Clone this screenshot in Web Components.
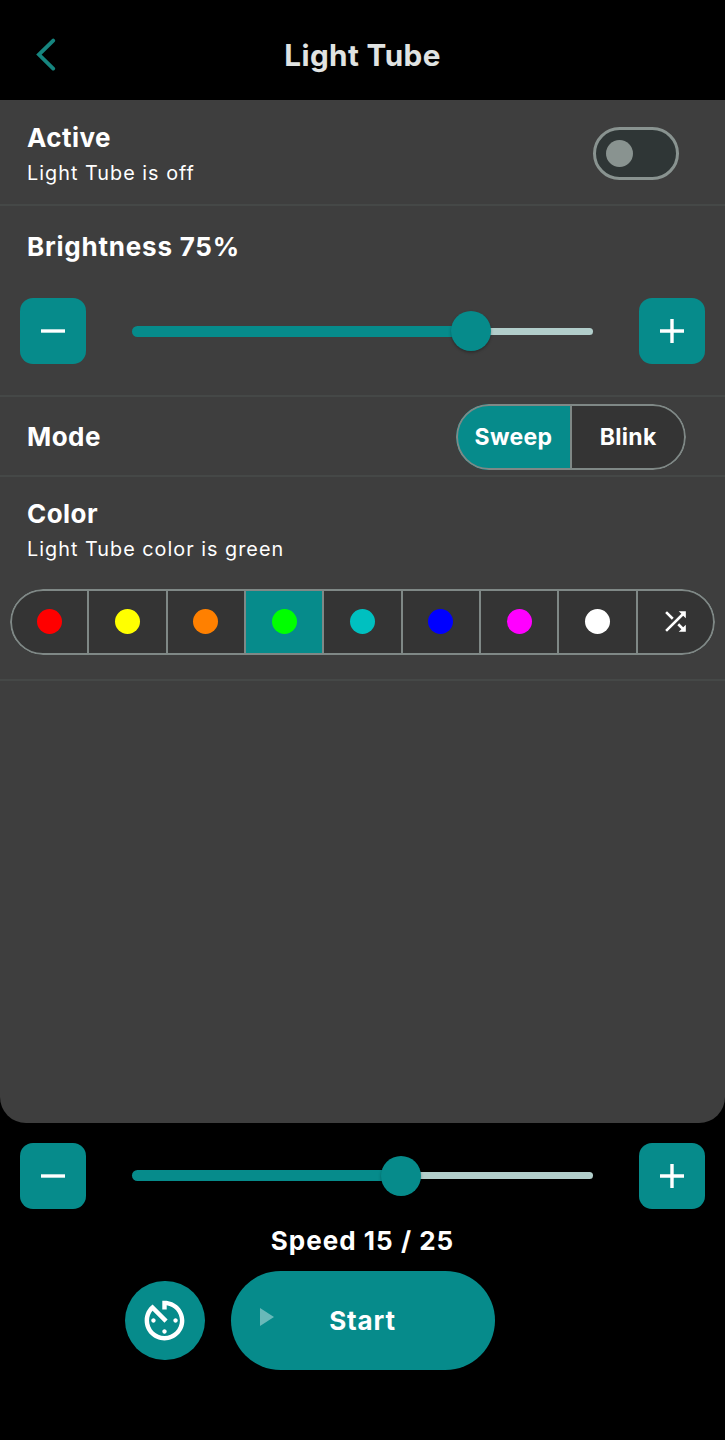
<!DOCTYPE html>
<html lang="en">
<head>
<meta charset="utf-8">
<title>Light Tube</title>
<style>
  html, body { margin: 0; height: 100%; background: #000; }
  body {
    --teal: #068b8b; --panel: #3e3e3e; --cell: #343434; --outline: #7f8886; --rule: #454847;
    font-family: Inter, sans-serif; color: #fff;
  }
</style>
</head>
<body>
<light-tube-app></light-tube-app>
<script>
class Base extends HTMLElement {
  constructor() {
    super();
    this.attachShadow({ mode: 'open' });
  }
  connectedCallback() {
    this.shadowRoot.innerHTML = '<style>*{box-sizing:border-box}' + this.css() + '</style>' + this.html();
  }
  css() { return ''; }
  html() { return '<slot></slot>'; }
}

customElements.define('app-header', class extends Base {
  css() { return `
    :host { display: grid; grid-template-columns: 92px 1fr 92px; align-items: center; height: 100px; padding-top: 9px; box-sizing: border-box; background: #000; }
    svg { display: block; margin-left: 36px; }
    h1 { margin: 0; text-align: center; font-size: 29.7px; line-height: 36px; font-weight: 700; letter-spacing: .4px; color: #e0e3e2; }`; }
  html() { return `
    <svg width="20" height="34" viewBox="0 0 20 34"><path d="M17.2 2.6 L2.9 16.6 L17.2 30.6" fill="none" stroke="#16857f" stroke-width="3.8" stroke-linecap="round"/></svg>
    <h1><slot></slot></h1>`; }
});

customElements.define('setting-label', class extends Base {
  css() { return `
    :host { display: block; }
    .t { font-size: 26px; line-height: 32px; font-weight: 700; letter-spacing: var(--track, .45px); }
    .s { font-size: 19.8px; line-height: 26px; font-weight: 400; letter-spacing: 1.02px; padding-top: 6px; }`; }
  html() {
    const s = this.getAttribute('sub');
    return `<div class="t"><slot></slot></div>` + (s ? `<div class="s">${s}</div>` : '');
  }
});

customElements.define('toggle-switch', class extends Base {
  css() { return `
    :host { display: flex; align-items: center; box-sizing: border-box; width: 86px; height: 53px; border: 3px solid #899390; border-radius: 27px; background: #2f3636; padding-left: 10px; }
    i { width: 27px; height: 27px; border-radius: 50%; background: #899390; }`; }
  html() { return '<i></i>'; }
});

customElements.define('step-button', class extends Base {
  css() { return `
    :host { display: grid; place-items: center; width: 66px; height: 66px; border-radius: 13px; background: var(--teal); }
    svg { display: block; }`; }
  html() {
    const v = this.getAttribute('kind') === 'plus' ? 'M12 0V24' : '';
    return `<svg width="24" height="24" viewBox="0 0 24 24"><path d="M0 12H24${v}" stroke="#fff" stroke-width="3.4" fill="none"/></svg>`;
  }
});

customElements.define('value-slider', class extends Base {
  css() { return `
    :host { display: flex; align-items: center; height: 40px; }
    .on { height: 10.6px; border-radius: 6px 0 0 6px; background: var(--teal); margin-right: -2px; }
    .knob { flex: none; width: 40px; height: 40px; border-radius: 50%; background: var(--teal); box-shadow: 0 1.5px 3px rgba(0,0,0,.3); z-index: 1; }
    .off { flex: 1; height: 7.4px; border-radius: 0 4px 4px 0; background: #b2cecb; margin-left: -2px; }`; }
  html() { return `<div class="on" style="width:${this.getAttribute('fill')}px"></div><div class="knob"></div><div class="off"></div>`; }
});

customElements.define('stepped-slider', class extends Base {
  css() { return `
    :host { display: grid; grid-template-columns: 66px 461.5px 66px; justify-content: space-between; align-items: center; padding: 0 20px; }`; }
  html() { return `<step-button kind="minus"></step-button><value-slider fill="${this.getAttribute('fill')}"></value-slider><step-button kind="plus"></step-button>`; }
});

customElements.define('segment-bar', class extends Base {
  css() { return `
    :host { display: flex; position: relative; height: 66px; border-radius: 33px; overflow: hidden; background: var(--cell); }
    :host::after { content: ''; position: absolute; inset: 0; box-sizing: border-box; border: 2px solid var(--outline); border-radius: 33px; }
    ::slotted(*) { flex: 1; }
    ::slotted(:not(:first-child)) { box-shadow: -1px 0 0 var(--outline), inset 1px 0 0 var(--outline); }`; }
});

customElements.define('segment-item', class extends Base {
  css() { return `
    :host { display: flex; align-items: center; justify-content: center; box-sizing: border-box; font-size: 23px; font-weight: 700; letter-spacing: .3px; }
    :host([selected]) { background: var(--teal); }
    i { width: 25px; height: 25px; border-radius: 50%; margin-top: -1px; }
    svg { display: block; }`; }
  html() {
    const c = this.getAttribute('color');
    if (c) return `<i style="background:${c}"></i>`;
    if (this.hasAttribute('shuffle')) return `<svg width="31" height="31" viewBox="0 0 24 24" fill="#fff"><path d="M10.59 9.17L5.41 4 4 5.41l5.17 5.17 1.42-1.41zM14.5 4l2.04 2.04L4 18.59 5.41 20 17.96 7.46 20 9.5V4h-5.5zm.33 9.41l-1.41 1.41 3.13 3.13L14.5 20H20v-5.5l-2.04 2.04-3.13-3.13z"/></svg>`;
    return '<slot></slot>';
  }
});

customElements.define('timer-button', class extends Base {
  css() { return `
    :host { display: grid; place-items: center; width: 79.5px; height: 79.5px; border-radius: 50%; background: var(--teal); }
    svg { display: block; }`; }
  html() { return `<svg width="53" height="53" viewBox="0 0 24 24" fill="#fff"><path d="M11 17c0 .55.45 1 1 1s1-.45 1-1-.45-1-1-1-1 .45-1 1zm0-14v4h2V5.08c3.39.49 6 3.39 6 6.92 0 3.87-3.13 7-7 7s-7-3.13-7-7c0-1.68.59-3.22 1.58-4.42L12 13l1.41-1.41-6.8-6.8v.02C4.42 6.45 3 9.05 3 12c0 4.97 4.02 9 9 9 4.97 0 9-4.03 9-9s-4.03-9-9-9h-1zm7 9c0-.55-.45-1-1-1s-1 .45-1 1 .45 1 1 1 1-.45 1-1zM6 12c0 .55.45 1 1 1s1-.45 1-1-.45-1-1-1-1 .45-1 1z"/></svg>`; }
});

customElements.define('start-button', class extends Base {
  css() { return `
    :host { display: grid; grid-template-columns: 43px 1fr 43px; align-items: center; box-sizing: border-box; width: 264px; height: 99.5px; border-radius: 50px; background: var(--teal); }
    svg { display: block; justify-self: end; margin-bottom: 7px; }
    span { text-align: center; font-size: 26px; line-height: 32px; font-weight: 700; letter-spacing: .85px; }`; }
  html() { return `<svg width="14" height="18" viewBox="0 0 14 18"><path d="M0 0L14 9L0 18Z" fill="#fff" fill-opacity=".4"/></svg><span><slot></slot></span>`; }
});

customElements.define('light-tube-app', class extends Base {
  css() { return `
    :host { display: block; width: 725px; height: 1440px; background: #000; overflow: hidden; }
    main { display: flex; flex-direction: column; height: 1023px; background: var(--panel); border-radius: 0 0 26px 26px; }
    section { flex: none; border-bottom: 2px solid var(--rule); }
    setting-label { padding-left: 27px; }
    .active { display: flex; justify-content: space-between; height: 106px; padding: 22px 46px 0 0; }
    .active toggle-switch { margin-top: 5px; }
    .bright { height: 191.4px; padding-top: 24.6px; --track: .78px; }
    .bright stepped-slider { margin-top: 35.8px; }
    .mode { display: flex; align-items: center; justify-content: space-between; height: 79.6px; padding-right: 39.5px; }
    .mode setting-label { padding-top: 2px; }
    .mode segment-bar { width: 229.5px; margin-top: 1px; }
    .color { height: 204px; padding-top: 21px; }
    .color segment-bar { margin: 27px 10.2px 0; }
    footer { padding-top: 19.6px; }
    .speed { text-align: center; font-size: 26px; line-height: 32px; font-weight: 700; letter-spacing: 1.02px; margin-top: 16.4px; }
    .actions { display: grid; grid-template-columns: 79.5px 264px; column-gap: 26px; align-items: center; padding-left: 125px; margin-top: 14px; }`; }
  html() { return `
    <app-header>Light Tube</app-header>
    <main>
      <section class="active"><setting-label sub="Light Tube is off">Active</setting-label><toggle-switch></toggle-switch></section>
      <section class="bright"><setting-label>Brightness 75%</setting-label><stepped-slider fill="321.5"></stepped-slider></section>
      <section class="mode"><setting-label>Mode</setting-label>
        <segment-bar><segment-item selected>Sweep</segment-item><segment-item>Blink</segment-item></segment-bar></section>
      <section class="color"><setting-label sub="Light Tube color is green">Color</setting-label>
        <segment-bar>
          <segment-item color="#ff0000"></segment-item><segment-item color="#ffff00"></segment-item><segment-item color="#ff8000"></segment-item>
          <segment-item color="#00ff00" selected></segment-item><segment-item color="#00c0c0"></segment-item><segment-item color="#0000ff"></segment-item>
          <segment-item color="#ff00ff"></segment-item><segment-item color="#ffffff"></segment-item><segment-item shuffle></segment-item>
        </segment-bar></section>
    </main>
    <footer>
      <stepped-slider fill="251"></stepped-slider>
      <div class="speed">Speed 15 / 25</div>
      <div class="actions"><timer-button></timer-button><start-button>Start</start-button></div>
    </footer>`; }
});
</script>
</body>
</html>
